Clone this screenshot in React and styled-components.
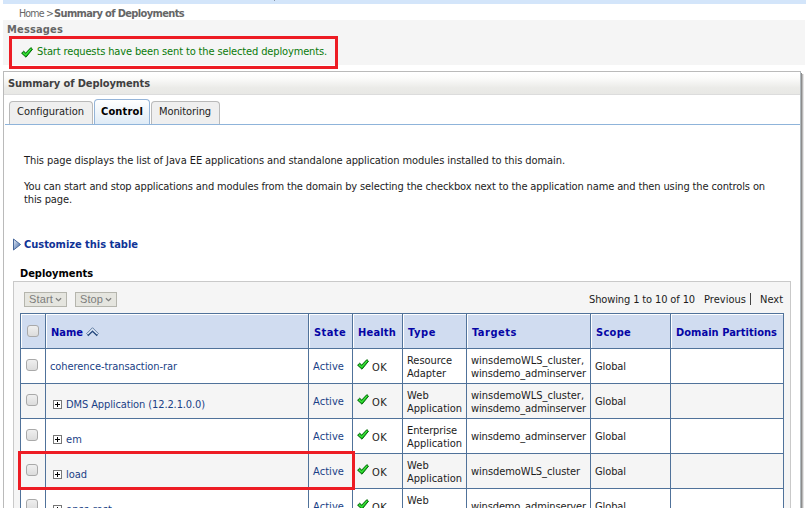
import React, { useLayoutEffect, useRef, useState } from "react";
import styled, { createGlobalStyle, css } from "styled-components";

const GlobalStyle = createGlobalStyle`
  * { box-sizing: border-box; }
  html, body { margin: 0; padding: 0; background: #fff; overflow: hidden; }
  body {
    font-family: "DejaVu Sans Condensed", "DejaVu Sans", Tahoma, sans-serif;
    font-stretch: condensed;
    font-size: 11px;
    line-height: 13px;
    color: #1c1c1c;
  }
`;

/* Text set to a fixed measure: tracking is adjusted so the run fills `width`. */
const Run = styled.span`
  display: inline-block;
  white-space: pre;
  font-weight: ${(p) => (p.$bold ? 700 : "inherit")};
  font-size: ${(p) => (p.$size ? `${p.$size}px` : "inherit")};
`;
function Text({ children, width, bold, size }) {
  const ref = useRef(null);
  const [tracking, setTracking] = useState(0);
  useLayoutEffect(() => {
    const natural = ref.current.getBoundingClientRect().width;
    setTracking((width - natural) / children.length);
  }, [children, width]);
  return (
    <Run ref={ref} $bold={bold} $size={size} style={{ letterSpacing: `${tracking}px` }}>
      {children}
    </Run>
  );
}

const Page = styled.div`
  position: relative;
  width: 806px;
  height: 508px;
  overflow: hidden;
  padding-left: 3px;
  display: flex;
  flex-direction: column;
`;
const TopBar = styled.div`
  flex: none;
  height: 4px;
  background: #d3e5fa;
  padding-left: 271px;
  &::before { content: ""; display: block; width: 1px; height: 1px; background: #8a97a8; }
`;
const Breadcrumb = styled.div`
  flex: none;
  height: 16px;
  padding: 3px 0 0 16px;
  display: flex;
  gap: 1px;
  color: #666;
`;
const Messages = styled.section`
  flex: none;
  width: 802px;
  height: 45px;
  margin-bottom: 6px;
  padding: 3px 0 0 4px;
  background: #f5f5f5;
  color: #666;
`;
const Notice = styled.div`
  width: 329px;
  height: 33px;
  margin-left: 2px;
  border: 3px solid #ed1c24;
  padding: 6px 0 0 9px;
  display: flex;
  gap: 4px;
  color: #0a7a0a;
  svg { margin-top: 2px; }
`;
const Panel = styled.main`
  flex: none;
  width: 798px;
  height: 460px;
  border: 1px solid #bababa;
  border-right-color: #b0b8bc;
  box-shadow: 1px 2px 0 #8c8c8c, 2px 3px 0 #b8b8b8, 3px 3px 0 #e4e4e4;
  background: #fff;
`;
const PanelTitle = styled.h1`
  margin: 1px 0 0;
  height: 22px;
  padding: 4px 0 0 4px;
  font-size: 11px;
  border-bottom: 1px solid #dcdcdc;
  background: linear-gradient(#fff 0, #fbfbfa 25%, #ebebe8 70%, #e8e8e5 100%);
  color: #404040;
`;
const Tabs = styled.nav`
  height: 30px;
  margin: 0 0 0 1px;
  padding: 4px 0 0 4px;
  display: flex;
  align-items: flex-end;
  border-bottom: 1px solid #8fb4da;
`;
const Tab = styled.div`
  width: ${(p) => p.$w}px;
  height: 23px;
  margin-right: 1px;
  padding: 3px 0 0 7px;
  border: 1px solid #b9b9b9;
  border-bottom: 0;
  border-radius: 4px 4px 0 0;
  background: #efefef;
  color: #222;
  ${(p) => p.$active && css`
    height: 25px;
    padding: 5px 0 0 6px;
    border-color: #94b4d8;
    background: linear-gradient(#fff, #dfebf6);
    color: #000;
  `}
`;
const Intro = styled.div`
  padding: 29px 0 0 20px;
  height: 113px;
  p { margin: 0 0 13px; display: flex; flex-direction: column; align-items: flex-start; }
`;
const Customize = styled.div`
  display: flex;
  align-items: center;
  gap: 3px;
  height: 13px;
  padding-left: 9px;
  color: #0f3396;
`;
const TableTitle = styled.h2`
  margin: 16px 0 0;
  height: 14px;
  padding-left: 16px;
  font-size: 11px;
  line-height: 13px;
  color: #000;
`;
const TableBox = styled.section`
  width: 778px;
  height: 260px;
  margin-left: 9px;
  padding-left: 6px;
  border: 1px solid #c9c9c9;
  background: #f5f5f5;
`;
const Toolbar = styled.div`
  height: 31px;
  padding: 10px 7px 0 4px;
  display: flex;
  align-items: flex-start;
`;
const Button = styled.button`
  width: ${(p) => p.$w}px;
  height: 15px;
  margin: 0 8px 0 0;
  padding: 0 4px;
  display: flex;
  align-items: center;
  gap: 2px;
  border: 1px solid #b5b5ad;
  background: #e5e5df;
  color: #7d7d7d;
  font: 11px/13px "Liberation Sans", Arial, sans-serif;
`;
const Pager = styled.div`
  margin-left: auto;
  display: flex;
  padding-top: 1px;
`;
const PagerLink = styled.span`
  margin-left: 9px;
  height: 13px;
`;
const Divider = styled.span`
  width: 1px;
  height: 12px;
  margin-left: 4px;
  background: #444;
`;
const Grid = styled.div`
  width: 764px;
  border-left: 1px solid #50729a;
  border-top: 1px solid #50729a;
`;
const Row = styled.div`
  display: grid;
  grid-template-columns: 25px 263px 44px 50px 64px 124px 80px 113px;
  height: 35px;
  background: ${(p) => (p.$shaded ? "#f5f5f5" : "#fff")};
`;
const Cell = styled.div`
  border-right: 1px solid #50729a;
  border-bottom: 1px solid #50729a;
  padding-left: 4px;
  display: flex;
  align-items: center;
  gap: 3px;
  color: ${(p) => (p.$link ? "#1a3f86" : "#1c1c1c")};
`;
const HeadCell = styled(Cell)`
  padding: 2px 0 0 5px;
  gap: 3px;
  background: #d0dcf0;
  box-shadow: inset 1px 1px 0 #fff;
  color: #0505a5;
`;
const CheckCell = styled(Cell)`
  align-items: flex-start;
  padding: 10px 0 0 5px;
`;
const HeadCheckCell = styled(HeadCell)`
  align-items: flex-start;
  padding: 11px 0 0 6px;
`;
const Box = styled.span`
  width: 12px;
  height: 12px;
  border: 1px solid #a9a9a9;
  border-radius: 3px;
  background: linear-gradient(#efefef, #dcdcdc);
`;
const NameCell = styled(Cell)`
  padding-left: ${(p) => (p.$nested ? 7 : 4)}px;
  padding-top: ${(p) => (p.$nested ? 6 : 1)}px;
  gap: 4px;
`;
const HealthCell = styled(Cell)`
  svg { margin-bottom: 4px; }
  span { margin-top: 2px; }
`;
const Stack = styled(Cell)`
  flex-direction: column;
  align-items: flex-start;
  justify-content: center;
  gap: 0;
  padding-top: 1px;
`;
const Highlight = styled.div`
  position: absolute;
  left: 18px;
  top: 451px;
  width: 337px;
  height: 39px;
  border: 3px solid #ed1c24;
`;

const Tick = () => (
  <svg width="12" height="11" viewBox="0 0 12 11">
    <path d="M.6 6.2 2.7 4.2 4.7 6.1 9.9.6 11.5 2.2 5 10.2Z" fill="#12c51a" stroke="#08650d" strokeWidth="1" strokeLinejoin="round" />
    <path d="M2 5.8 4.7 8 10 1.9" fill="none" stroke="#59ed4e" strokeWidth=".9" />
  </svg>
);
const Plus = () => (
  <svg width="9" height="9" viewBox="0 0 9 9" shapeRendering="crispEdges">
    <rect x=".5" y=".5" width="8" height="8" fill="#fff" stroke="#777" />
    <path d="M2 4.5h5M4.5 2v5" stroke="#000" />
  </svg>
);
const Caret = () => (
  <svg width="8" height="5" viewBox="0 0 8 5">
    <path d="M1 1 4 3.8 7 1" fill="none" stroke="#7d7d7d" strokeWidth="1.4" />
  </svg>
);
const SortUp = () => (
  <svg width="13" height="10" viewBox="0 0 13 10">
    <path d="M.6 6.6 6.5.7 12.4 6.6 10.8 8.2 6.5 4 2.2 8.2Z" fill="#dbe6f5" stroke="#46658f" strokeWidth=".8" />
    <path d="M1.8 8.7 6.5 4.3 11.2 8.7" fill="none" stroke="#264a7f" strokeWidth="1.3" />
  </svg>
);
const Disclosure = () => (
  <svg width="8" height="13" viewBox="0 0 8 13">
    <defs>
      <linearGradient id="disc" x1="0" y1="0" x2="1" y2="1">
        <stop offset="0" stopColor="#eef3fb" />
        <stop offset="1" stopColor="#315c9e" />
      </linearGradient>
    </defs>
    <path d="M.5 1 7.5 6.5.5 12Z" fill="url(#disc)" stroke="#45669a" />
  </svg>
);

const columns = [["State", 32], ["Health", 38], ["Type", 28], ["Targets", 45], ["Scope", 35], ["Domain Partitions", 101]];
const CLUSTER = ["winsdemoWLS_cluster", 109];
const CLUSTER_COMMA = ["winsdemoWLS_cluster,", 113];
const ADMIN = ["winsdemo_adminserver", 115];
const WEB = [["Web", 22], ["Application", 55]];
const rows = [
  { name: ["coherence-transaction-rar", 127], type: [["Resource", 45], ["Adapter", 39]], targets: [CLUSTER_COMMA, ADMIN] },
  { name: ["DMS Application (12.2.1.0.0)", 139], nested: true, type: WEB, targets: [CLUSTER_COMMA, ADMIN] },
  { name: ["em", 16], nested: true, type: [["Enterprise", 50], ["Application", 55]], targets: [ADMIN] },
  { name: ["load", 21], nested: true, type: WEB, targets: [CLUSTER] },
  { name: ["opss-rest", 46], nested: true, type: WEB, targets: [ADMIN] },
];
const lines = (items) => items.map(([t, w]) => <Text key={t} width={w}>{t}</Text>);

export default function App() {
  return (
    <>
      <GlobalStyle />
      <Page>
        <TopBar />
        <Breadcrumb>
          <Text width={34} size={10.5}>{"Home >"}</Text>
          <Text width={130} bold>Summary of Deployments</Text>
        </Breadcrumb>
        <Messages>
          <Text width={56} bold>Messages</Text>
          <Notice>
            <Tick />
            <Text width={290}>Start requests have been sent to the selected deployments.</Text>
          </Notice>
        </Messages>
        <Panel>
          <PanelTitle><Text width={142} bold>Summary of Deployments</Text></PanelTitle>
          <Tabs>
            <Tab $w={84}><Text width={67}>Configuration</Text></Tab>
            <Tab $w={56} $active><Text width={42} bold>Control</Text></Tab>
            <Tab $w={69}><Text width={52}>Monitoring</Text></Tab>
          </Tabs>
          <Intro>
            <p><Text width={541}>This page displays the list of Java EE applications and standalone application modules installed to this domain.</Text></p>
            <p>
              <Text width={741}>You can start and stop applications and modules from the domain by selecting the checkbox next to the application name and then using the controls on</Text>
              <Text width={48}>this page.</Text>
            </p>
          </Intro>
          <Customize><Disclosure /><Text width={114} bold>Customize this table</Text></Customize>
          <TableTitle><Text width={73} bold>Deployments</Text></TableTitle>
          <TableBox>
            <Toolbar>
              <Button $w={43}><Text width={24}>Start</Text><Caret /></Button>
              <Button $w={42}><Text width={23}>Stop</Text><Caret /></Button>
              <Pager>
                <Text width={106}>Showing 1 to 10 of 10</Text>
                <PagerLink><Text width={42}>Previous</Text></PagerLink>
                <Divider />
                <PagerLink><Text width={23}>Next</Text></PagerLink>
              </Pager>
            </Toolbar>
            <Grid>
              <Row>
                <HeadCheckCell><Box /></HeadCheckCell>
                <HeadCell><Text width={32} bold>Name</Text><SortUp /></HeadCell>
                {columns.map(([t, w]) => <HeadCell key={t}><Text width={w} bold>{t}</Text></HeadCell>)}
              </Row>
              {rows.map((r, i) => (
                <Row key={r.name[0]} $shaded={i % 2 === 1}>
                  <CheckCell><Box /></CheckCell>
                  <NameCell $link $nested={r.nested}>
                    {r.nested && <Plus />}
                    {lines([r.name])}
                  </NameCell>
                  <Cell $link><Text width={31}>Active</Text></Cell>
                  <HealthCell><Tick /><Text width={15}>OK</Text></HealthCell>
                  <Stack>{lines(r.type)}</Stack>
                  <Stack>{lines(r.targets)}</Stack>
                  <Cell><Text width={31}>Global</Text></Cell>
                  <Cell />
                </Row>
              ))}
            </Grid>
          </TableBox>
        </Panel>
        <Highlight />
      </Page>
    </>
  );
}
